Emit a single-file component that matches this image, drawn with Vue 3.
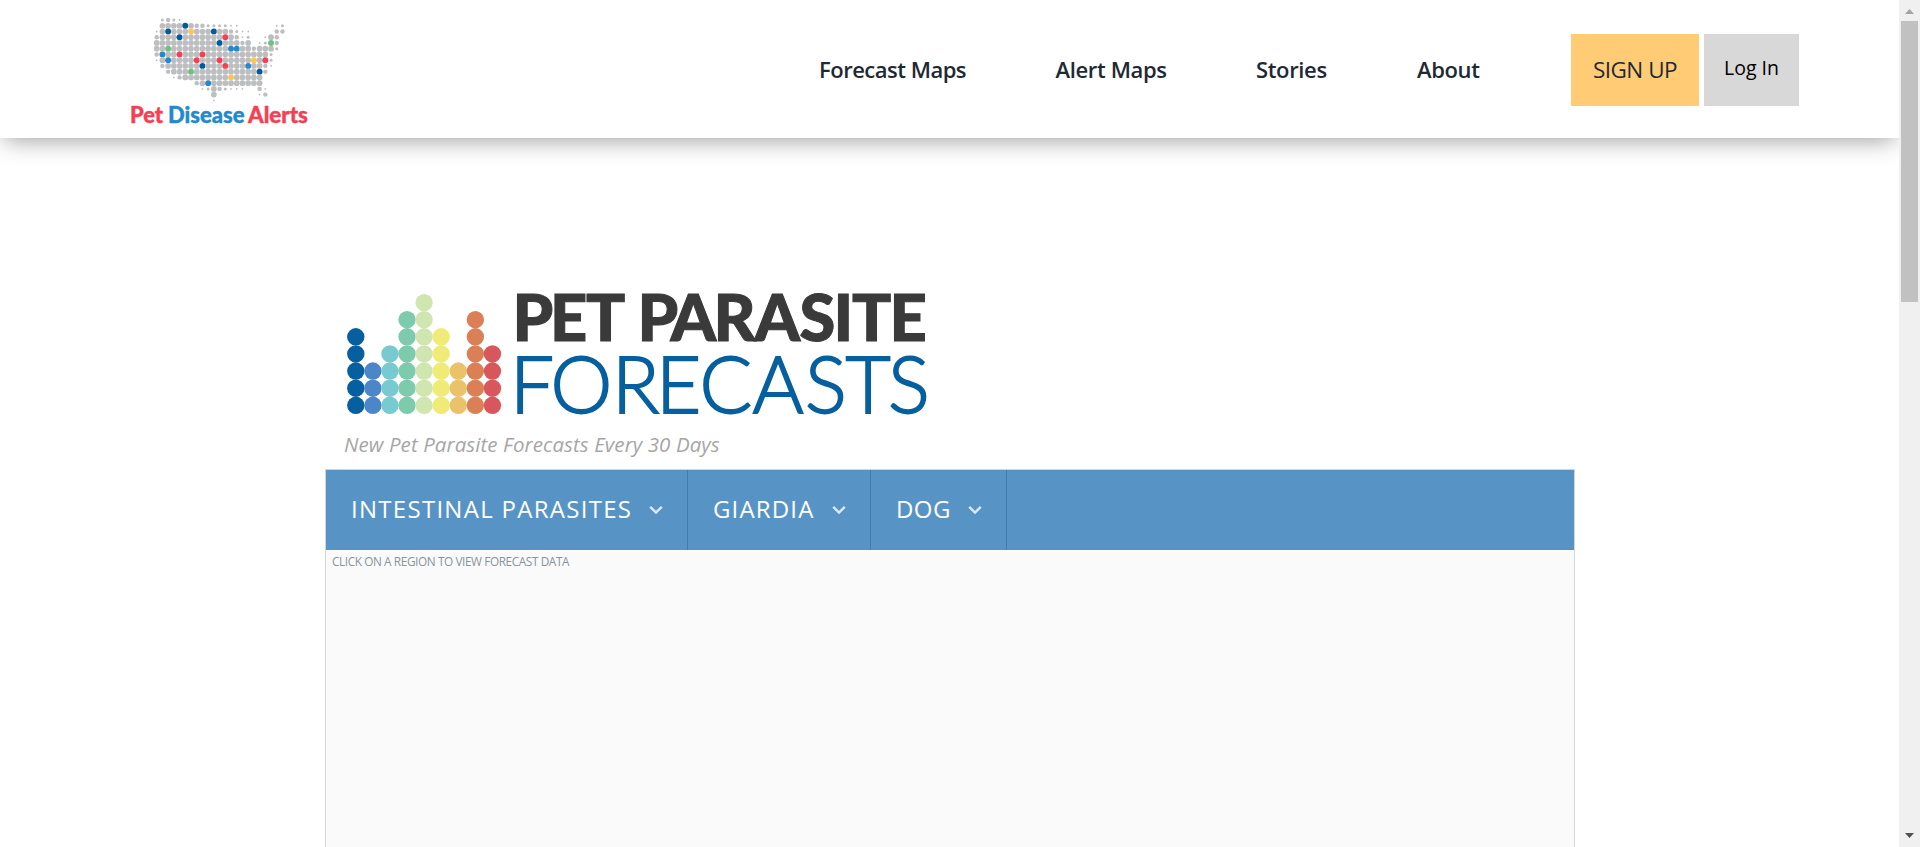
<script setup>
// Each character is one cell of the dotted map: 1-4 are grey dots by size,
// letters are highlighted regions, dots are empty cells.
const grid = [
  '.2321..................',
  '.4444n4332222110.....12',
  '14n444y444n443211....33',
  '3444n4444444r4312..143.',
  '44444444444n44434.12g3.',
  '44g4444444444bb4434442.',
  '3b44r444r444444444442..',
  '14b4444r444r44444y4r2..',
  '.3444444n444r444b4431..',
  '..3444g44444444444n3...',
  '...13444444444y44444...',
  '.......34b444444444....',
  '........12432111..31...',
  '..........4.......13...',
  '..........1............'
].map((line, i) => (i === 10 ? '...1344444444y44444....' : line))
const radius = { 1: 0.9, 2: 1.5, 3: 2.2, 4: 2.85 }
const tone = { n: '#005b9c', b: '#2389cb', r: '#f53f52', g: '#6dc07f', y: '#ffc35c' }
const dots = grid.flatMap((line, y) =>
  [...line].flatMap((c, x) =>
    radius[c] || tone[c]
      ? [{ x: 26.7 + x * 5.717, y: 10 + y * 5.74, r: radius[c] || 2.95, fill: tone[c] || '#bcbec0' }]
      : []
  )
)

const columns = [
  [5, '#065f9e'], [3, '#4b87c8'], [4, '#78cad1'], [6, '#7dcaac'], [7, '#d1e5b1'],
  [5, '#f0eb76'], [3, '#eac26a'], [6, '#db8056'], [4, '#d8575d']
]
const balls = columns.flatMap(([n, fill], x) =>
  Array.from({ length: n }, (_, i) => ({ x: 10.8 + x * 17.08, y: 115.3 - i * 17.12, fill }))
)

const links = ['Forecast Maps', 'Alert Maps', 'Stories', 'About']
const filters = [
  { label: 'INTESTINAL PARASITES', cls: 'wide' },
  { label: 'GIARDIA', cls: 'mid' },
  { label: 'DOG', cls: 'slim' }
]
</script>

<template>
  <div class="page">
    <div class="content">
      <header class="header">
        <svg class="brand" width="190" height="120" viewBox="0 0 190 120">
          <circle v-for="(d, i) in dots" :key="i" :cx="d.x" :cy="d.y" :r="d.r" :fill="d.fill" />
          <g class="brand-name">
            <text class="red" x="0" y="112.6" textLength="33" lengthAdjust="spacingAndGlyphs">Pet</text>
            <text class="blue" x="38" y="112.6" textLength="76.5" lengthAdjust="spacingAndGlyphs">Disease</text>
            <text class="red" x="118" y="112.6" textLength="60" lengthAdjust="spacingAndGlyphs">Alerts</text>
          </g>
        </svg>
        <nav class="nav">
          <a v-for="l in links" :key="l">{{ l }}</a>
        </nav>
        <a class="signup"><span>SIGN UP</span></a>
        <a class="login"><span>Log In</span></a>
      </header>

      <main class="main">
        <svg class="title" width="600" height="160" viewBox="0 -20 600 160">
          <circle v-for="(b, i) in balls" :key="i" :cx="b.x" :cy="b.y" r="8.7" :fill="b.fill" />
          <text class="title-top" x="167.5 205 241 267 292.5 325.5 368.5 409.5 454.5 488.5 507 544.5" y="51">PET PARASITE</text>
          <text class="title-bottom" x="165 205.5 267 311 354.5 407.5 460 500.5 543" y="122.7">FORECASTS</text>
        </svg>
        <p class="tagline"><span>New Pet Parasite Forecasts Every 30 Days</span></p>
        <section class="panel">
          <div class="filters">
            <div v-for="f in filters" :key="f.label" class="filter" :class="f.cls">
              <span>{{ f.label }}</span>
              <svg width="14" height="10" viewBox="0 0 14 10"><path d="M1.2 1.8 L7 7.6 L12.8 1.8" /></svg>
            </div>
          </div>
          <p class="hint">CLICK ON A REGION TO VIEW FORECAST DATA</p>
        </section>
      </main>
    </div>
    <div class="scrollbar">
      <svg width="21" height="21"><path d="M6 14 H15 L10.5 9 Z" fill="#a3a3a3" /></svg>
      <div class="thumb"></div>
      <svg class="down" width="21" height="21"><path d="M6 7 H15 L10.5 12 Z" fill="#505050" /></svg>
    </div>
  </div>
</template>

<style>
body {
  margin: 0;
  overflow: hidden;
}
</style>

<style scoped>
.page {
  display: flex;
  width: 1920px;
  height: 847px;
  overflow: hidden;
  background: #fff;
  font-family: "Open Sans", "Noto Sans", sans-serif;
}
.content {
  width: 1899px;
  display: flex;
  flex-direction: column;
  overflow: hidden;
}
.header {
  flex: none;
  display: flex;
  box-sizing: border-box;
  height: 138px;
  padding: 10px 0 0 130px;
  background: #fff;
  box-shadow: 0 4px 24px -4px rgba(0, 0, 0, 0.45);
}
.brand {
  flex: none;
}
.brand-name {
  font: 900 22.5px Lato, sans-serif;
  stroke-width: 0.4;
}
.red { fill: #f53f52; stroke: #f53f52; }
.blue { fill: #2389cb; stroke: #2389cb; }
.nav {
  display: grid;
  grid-template-columns: 236.5px 200.5px 161px 154px;
  margin: 43px 0 0 499px;
  font-size: 22px;
  font-weight: 600;
  line-height: 32px;
  letter-spacing: -0.35px;
  color: #1f2933;
  white-space: nowrap;
}
.nav a:first-child {
  letter-spacing: -0.5px;
}
.signup,
.login {
  box-sizing: border-box;
  height: 72px;
  margin-top: 24px;
  text-align: center;
  white-space: nowrap;
}
.signup {
  width: 128px;
  background: #ffcc75;
  font-size: 22.5px;
  line-height: 71px;
  letter-spacing: -0.5px;
  color: #1f2933;
}
.login {
  width: 95px;
  margin-left: 5px;
  background: #d8d8d8;
  font-size: 19.5px;
  line-height: 68px;
  color: #000;
}
.main {
  display: flex;
  flex-direction: column;
  flex: 1;
  width: 1250px;
  margin-left: 325px;
  padding-top: 132px;
}
.title {
  flex: none;
  margin-left: 20px;
}
.title-top {
  font: 900 65px Lato, sans-serif;
  fill: #3a3a3a;
  stroke: #3a3a3a;
  stroke-width: 1;
}
.title-bottom {
  font: 300 78px Lato, sans-serif;
  fill: #065f9e;
  stroke: #065f9e;
  stroke-width: 1.8;
}
.tagline {
  margin: -1px 0 0 19px;
  height: 40px;
  font-size: 20.5px;
  line-height: 30px;
  font-style: italic;
  letter-spacing: 0.08px;
  color: #a6a6a6;
}
.panel {
  flex: 1;
  border: 1px solid #d5d5d5;
  border-bottom: 0;
  background: #fafafa;
}
.filters {
  display: flex;
  height: 80px;
  background: #5893c6;
}
.filter {
  box-sizing: border-box;
  display: flex;
  justify-content: space-between;
  align-items: center;
  padding: 0 24.5px 0 25px;
  border-right: 1px solid #457bab;
  color: #fff;
  font-size: 24px;
  font-weight: 500;
  white-space: nowrap;
}
.filter span {
  padding-bottom: 3px;
}
.wide { width: 362px; letter-spacing: 1.28px; }
.mid { width: 183px; letter-spacing: 1.15px; }
.slim { width: 136px; letter-spacing: 0.4px; }
.filter path {
  fill: none;
  stroke: #dce9f4;
  stroke-width: 2.4;
}
.hint {
  margin: 2px 0 0 6px;
  font-size: 11.8px;
  line-height: 18px;
  letter-spacing: -0.4px;
  color: #87939d;
}
.scrollbar {
  display: flex;
  flex-direction: column;
  width: 21px;
  background: #f0f0f0;
}
.thumb {
  width: 17px;
  height: 281px;
  margin-left: 2px;
  background: #c1c1c1;
}
.down {
  margin-top: auto;
}
</style>
